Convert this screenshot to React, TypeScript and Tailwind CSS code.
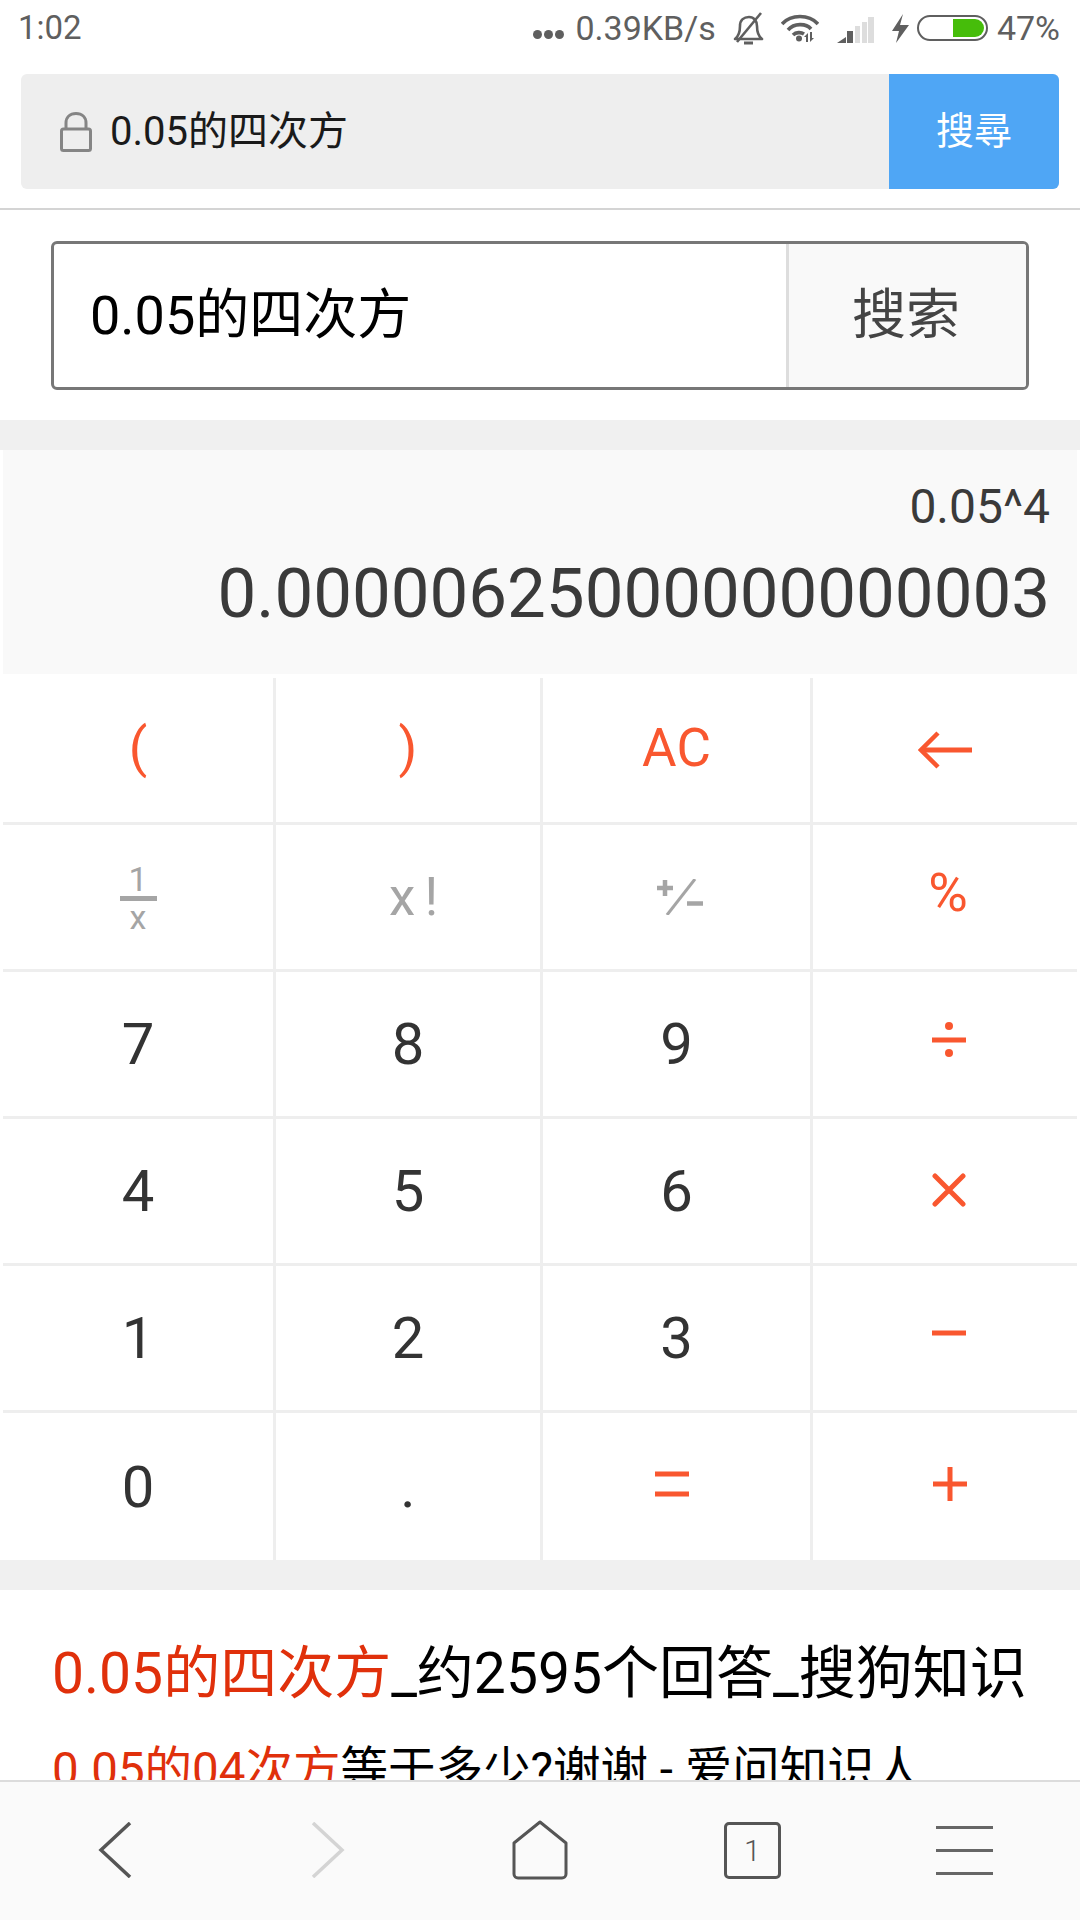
import React from 'react';

const CJK = "font-['Roboto','Noto_Sans_CJK_SC',sans-serif]";
const RED = '#f9572f';

type Tone = 'dark' | 'red' | 'gray';

const toneClass: Record<Tone, string> = {
  dark: 'text-[#333333]',
  red: 'text-[#f9572f]',
  gray: 'text-[#a5a5a5]',
};

const Arrow = () => (
  <svg width="54" height="38" viewBox="0 0 54 38" fill="none" stroke={RED}>
    <path d="M3 19H54" strokeWidth="5" />
    <path d="M20 2L3 19L20 36" strokeWidth="4.5" />
  </svg>
);

const Divide = () => (
  <svg width="34" height="36" viewBox="0 0 34 36" fill={RED}>
    <circle cx="17" cy="4" r="4" />
    <rect x="0" y="15.5" width="34" height="5" />
    <circle cx="17" cy="31" r="4" />
  </svg>
);

const Times = () => (
  <svg width="34" height="34" viewBox="0 0 34 34" fill="none" stroke={RED} strokeWidth="5" strokeLinecap="round">
    <path d="M3 3L31 31M31 3L3 31" />
  </svg>
);

const Minus = () => (
  <svg width="34" height="6" viewBox="0 0 34 6" fill={RED}>
    <rect y="0.5" width="34" height="5" />
  </svg>
);

const Equals = () => (
  <svg width="34" height="26" viewBox="0 0 34 26" fill={RED}>
    <rect y="0.5" width="34" height="5" />
    <rect y="20.5" width="34" height="5" />
  </svg>
);

const Plus = () => (
  <svg width="34" height="34" viewBox="0 0 34 34" fill={RED}>
    <rect y="14.5" width="34" height="5" />
    <rect x="14.5" width="5" height="34" />
  </svg>
);

const Fraction = () => (
  <div className="flex flex-col items-center text-[#a5a5a5] leading-none pt-[2px]">
    <span className="text-[34px] leading-[30px]">1</span>
    <span className="w-[37px] h-[5px] bg-[#a5a5a5] mt-[2px] mb-[1px]" />
    <span className="text-[34px] leading-[30px]">x</span>
  </div>
);

const PlusMinus = () => (
  <svg width="46" height="36" viewBox="0 0 46 36" fill="none" stroke="#a5a5a5">
    <path d="M0 9H16M8 1V17" strokeWidth="4.5" />
    <path d="M38 0L10 36" strokeWidth="3" />
    <path d="M30 24.5H46" strokeWidth="4.5" />
  </svg>
);

interface Key {
  label: React.ReactNode;
  tone: Tone;
  extra?: string;
}

const rows: Key[][] = [
  [
    { label: '(', tone: 'red', extra: 'text-[54px] pb-[4px]' },
    { label: ')', tone: 'red', extra: 'text-[54px] pb-[4px]' },
    { label: 'AC', tone: 'red', extra: 'text-[53px] pb-[3px]' },
    { label: <Arrow />, tone: 'red' },
  ],
  [
    { label: <Fraction />, tone: 'gray' },
    { label: 'x !', tone: 'gray', extra: 'text-[53px] pl-[9px] tracking-[-2px]' },
    { label: <PlusMinus />, tone: 'gray', extra: 'pl-[6px]' },
    { label: '%', tone: 'red', extra: 'text-[54px] pb-[8px] pl-[6px]' },
  ],
  [
    { label: '7', tone: 'dark' },
    { label: '8', tone: 'dark' },
    { label: '9', tone: 'dark' },
    { label: <Divide />, tone: 'red', extra: 'pb-[8px] pl-[8px]' },
  ],
  [
    { label: '4', tone: 'dark' },
    { label: '5', tone: 'dark' },
    { label: '6', tone: 'dark' },
    { label: <Times />, tone: 'red', extra: 'pb-[2px] pl-[8px]' },
  ],
  [
    { label: '1', tone: 'dark' },
    { label: '2', tone: 'dark' },
    { label: '3', tone: 'dark' },
    { label: <Minus />, tone: 'red', extra: 'pb-[10px] pl-[8px]' },
  ],
  [
    { label: '0', tone: 'dark' },
    { label: '.', tone: 'dark' },
    { label: <Equals />, tone: 'red', extra: 'pb-[6px] pr-[9px]' },
    { label: <Plus />, tone: 'red', extra: 'pb-[6px] pl-[10px]' },
  ],
];

const StatusBar = () => (
  <div className="h-[56px] flex items-center justify-between pl-[18px] pr-[20px] text-[#5f5f5f] font-['Roboto',sans-serif]">
    <span className="text-[33px]">1:02</span>
    <div className="flex items-center text-[34px]">
      <div className="flex gap-[2px] mr-[11px] mt-[12px]">
        <span className="w-[9px] h-[9px] rounded-full bg-[#5f5f5f]" />
        <span className="w-[9px] h-[9px] rounded-full bg-[#5f5f5f]" />
        <span className="w-[9px] h-[9px] rounded-full bg-[#5f5f5f]" />
      </div>
      <span>0.39KB/s</span>
      <svg className="ml-[17px]" width="31" height="33" viewBox="0 0 31 33" fill="none" stroke="#5f5f5f" strokeWidth="2.6">
        <path d="M2 27C6 24 7 20 7 14C7 8 11 5 16 5C21 5 24 9 24 14C24 20 25 24 29 27H2Z" strokeLinejoin="round" />
        <path d="M4 30L28 1" />
        <path d="M11 31H20" strokeWidth="3" />
      </svg>
      <svg className="ml-[17px]" width="38" height="28" viewBox="0 0 38 28" fill="none" stroke="#5f5f5f" strokeWidth="3.6">
        <path d="M1 10C10 0 28 0 37 10" />
        <path d="M7 16C13 9 25 9 30 15" />
        <path d="M12 21C15 18 20 18 23 20" />
        <circle cx="18" cy="24.5" r="3" fill="#5f5f5f" stroke="none" />
        <path d="M23 23L27 19V28H25V23Z" fill="#5f5f5f" stroke="none" />
        <path d="M33 24L29 28V18H31V24Z" fill="#5f5f5f" stroke="none" />
      </svg>
      <svg className="ml-[18px] mt-[4px]" width="37" height="26" viewBox="0 0 37 26">
        <path d="M0 26L9 20V26Z" fill="#5f5f5f" />
        <rect x="10" y="14" width="6" height="12" fill="#5f5f5f" />
        <rect x="18" y="9" width="5" height="17" fill="#dddddd" />
        <rect x="25" y="5" width="5" height="21" fill="#dddddd" />
        <rect x="31" y="0" width="6" height="26" fill="#dddddd" />
      </svg>
      <svg className="ml-[18px]" width="17" height="29" viewBox="0 0 17 29">
        <path d="M11 0L0 17H7L4 29L17 11H8Z" fill="#5f5f5f" />
      </svg>
      <div className="ml-[8px] w-[71px] h-[26px] rounded-full border-2 border-[#5f5f5f] flex justify-end overflow-hidden p-[2px]">
        <span className="w-[31px] h-full bg-[#46bd0a] rounded-r-full" />
      </div>
      <span className="ml-[9px]">47%</span>
    </div>
  </div>
);

const AddressBar = () => (
  <div className="border-b-2 border-[#d4d4d4] pt-[18px] pb-[19px] px-[21px]">
    <div className={`h-[115px] flex rounded-[6px] overflow-hidden bg-[#eeeeee] ${CJK}`}>
      <div className="flex-1 flex items-center pl-[39px]">
        <svg width="32" height="40" viewBox="0 0 32 40" fill="none" stroke="#858585" strokeWidth="3">
          <rect x="1.5" y="17" width="29" height="21.5" rx="2" />
          <path d="M6 17V11C6 5 10 1.5 16 1.5C22 1.5 26 5 26 11V17" />
        </svg>
        <span className="ml-[18px] text-[40px] text-[#1a1a1a]">0.05的四次方</span>
      </div>
      <div className="w-[170px] bg-[#4fa6f5] flex items-center justify-center text-white text-[38px]">搜尋</div>
    </div>
  </div>
);

const SearchBox = () => (
  <div className="pt-[31px] pb-[30px] px-[51px]">
    <div className={`h-[149px] flex border-[3px] border-[#777777] rounded-[6px] overflow-hidden ${CJK}`}>
      <div className="flex-1 flex items-center pl-[36px] text-[54px] text-black">0.05的四次方</div>
      <div className="w-[240px] bg-[#f9f9f9] border-l-[3px] border-[#dddddd] flex items-center justify-center pr-[3px] text-[54px] text-[#444444]">搜索</div>
    </div>
  </div>
);

const Calculator = () => (
  <div className="font-['Roboto',sans-serif]">
    <div className="mx-[3px] h-[224px] bg-[#f9f9f9] flex flex-col items-end pr-[27px] text-[#3a3a3a]">
      <div className="mt-[27px] text-[48px] leading-[60px]">0.05^4</div>
      <div className="mt-[17px] text-[69px] leading-[80px]">0.00000625000000000003</div>
    </div>
    <div className="pt-[4px] bg-white">
      {rows.map((row, r) => (
        <div
          key={r}
          className={`mx-[3px] h-[147px] grid grid-cols-[273px_267px_270px_264px] ${r < rows.length - 1 ? 'border-b-[3px] border-[#eeeeee]' : ''}`}
        >
          {row.map((k, c) => (
            <div
              key={c}
              className={`flex items-center justify-center leading-none ${toneClass[k.tone]} ${k.extra ?? 'text-[58px]'} ${c < 3 ? 'border-r-[3px] border-[#eeeeee]' : ''}`}
            >
              {k.label}
            </div>
          ))}
        </div>
      ))}
    </div>
  </div>
);

const ResultPreview = () => (
  <div className={`bg-white pl-[52px] pt-[49px] ${CJK}`}>
    <div className="text-[57px] leading-[70px] whitespace-nowrap text-black">
      <span className="text-[#e0300b]">0.05的四次方</span>_约2595个回答_搜狗知识
    </div>
    <div className="mt-[31px] text-[47.5px] leading-[60px] whitespace-nowrap text-black">
      <span className="text-[#e0300b]">0.05的04次方</span>等于多少?谢谢 - 爱问知识人
    </div>
  </div>
);

const BottomNav = () => (
  <div className="h-[140px] shrink-0 bg-[#fafafa] border-t-2 border-[#dcdcdc] flex items-center">
    <div className="w-full px-[9px] grid grid-cols-5 items-center justify-items-center pb-[2px]">
      <svg width="34" height="56" viewBox="0 0 34 56" fill="none" stroke="#555555" strokeWidth="3.5">
        <path d="M32 1L3 28L32 55" />
      </svg>
      <svg width="34" height="56" viewBox="0 0 34 56" fill="none" stroke="#d4d4d4" strokeWidth="3.5">
        <path d="M2 1L31 28L2 55" />
      </svg>
      <svg width="56" height="60" viewBox="0 0 56 60" fill="none" stroke="#555555" strokeWidth="3">
        <path d="M28 2L2 23V54C2 56.5 4 58 6 58H50C52 58 54 56.5 54 54V23Z" strokeLinejoin="round" />
      </svg>
      <div className="w-[57px] h-[57px] border-[3px] border-[#555555] rounded-[5px] flex items-center justify-center text-[30px] text-[#555555] font-['Roboto',sans-serif] font-light">1</div>
      <div className="flex flex-col gap-[20px]">
        <span className="block w-[57px] h-[3px] bg-[#666666]" />
        <span className="block w-[57px] h-[3px] bg-[#666666]" />
        <span className="block w-[57px] h-[3px] bg-[#666666]" />
      </div>
    </div>
  </div>
);

export default function App() {
  return (
    <div className="w-[1080px] h-[1920px] bg-white overflow-hidden flex flex-col">
      <div className="flex-1 overflow-hidden">
        <StatusBar />
        <AddressBar />
        <SearchBox />
        <div className="h-[30px] bg-[#f0f0f0]" />
        <Calculator />
        <div className="h-[30px] bg-[#f0f0f0]" />
        <ResultPreview />
      </div>
      <BottomNav />
    </div>
  );
}
